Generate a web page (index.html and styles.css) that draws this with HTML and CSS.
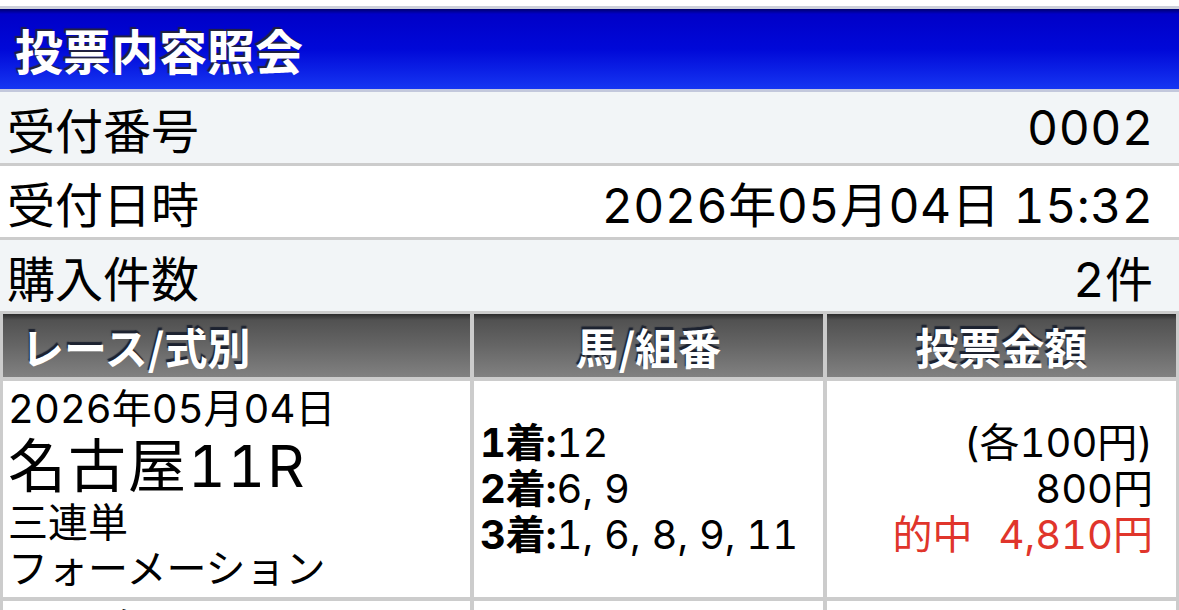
FILE: index.html
```html
<!DOCTYPE html>
<html lang="ja">
<head>
<meta charset="utf-8">
<title>投票内容照会</title>
<link rel="stylesheet" href="styles.css">
</head>
<body>
<div class="page">
  <div class="title">投票内容照会</div>
  <div class="info">
    <div class="info-row alt"><span class="label">受付番号</span><span class="value">0002</span></div>
    <div class="info-row"><span class="label">受付日時</span><span class="value">2026年05月04日 15:32</span></div>
    <div class="info-row alt last"><span class="label">購入件数</span><span class="value">2件</span></div>
  </div>
  <div class="bets">
    <div class="th th-left">レース/式別</div>
    <div class="th">馬/組番</div>
    <div class="th">投票金額</div>

    <div class="td race">
      <div class="race-date">2026年05月04日</div>
      <div class="race-name">名古屋11R</div>
      <div class="race-type">三連単</div>
      <div class="race-type">フォーメーション</div>
    </div>
    <div class="td combo">
      <div><b>1着:</b>12</div>
      <div><b>2着:</b>6, 9</div>
      <div><b>3着:</b>1, 6, 8, 9, 11</div>
    </div>
    <div class="td amount">
      <div>(各100円)</div>
      <div>800円</div>
      <div class="hit">的中<span class="hit-value">4,810円</span></div>
    </div>

    <div class="td race">
      <div class="race-date">2026年05月04日</div>
      <div class="race-name">名古屋12R</div>
      <div class="race-type">三連単</div>
      <div class="race-type">フォーメーション</div>
    </div>
    <div class="td combo">
      <div><b>1着:</b>1</div>
      <div><b>2着:</b>6, 9</div>
      <div><b>3着:</b>6, 8, 9</div>
    </div>
    <div class="td amount">
      <div>(各100円)</div>
      <div>400円</div>
    </div>
  </div>
</div>
</body>
</html>
```

FILE: styles.css
```css
html, body {
  margin: 0;
  padding: 0;
  background: #ffffff;
}

.page {
  height: 100vh;
  overflow: hidden;
  padding-top: 6px;
  box-sizing: border-box;
  font-family: Inter, "Noto Sans CJK JP", sans-serif;
  font-variant-numeric: tabular-nums;
  color: #000;
}

.title {
  height: 80px;
  border-top: 3px solid #cdd0da;
  border-bottom: 3px solid #c3c8dc;
  background: linear-gradient(#00006e 0px, #0000c8 5px, #0008d8 40px, #1636f2 80px);
  display: flex;
  align-items: center;
  padding-left: 15px;
  font-family: "Noto Sans CJK JP", sans-serif;
  font-weight: 700;
  font-size: 48px;
  color: #ffffff;
  text-shadow: -2px -2px 1px #22223a;
}

.info-row {
  height: 71px;
  display: flex;
  justify-content: space-between;
  align-items: center;
  padding: 0 26px 0 7px;
  font-size: 48px;
  background: #ffffff;
  border-bottom: 3px solid #cccccc;
}

.info-row .value {
  letter-spacing: 0.5px;
  margin-right: -0.5px;
}

.info-row.alt {
  background: #f2f5f7;
}

.info-row.last {
  border-bottom: none;
}

.bets {
  display: grid;
  grid-template-columns: 467px 1fr 1fr;
  gap: 4px;
  padding: 3px;
  background: #cccccc;
}

.th {
  height: 63px;
  display: flex;
  align-items: center;
  justify-content: center;
  background: linear-gradient(#2c2c2c 0px, #515151 6px, #646464 30px, #818181 63px);
  font-family: "Noto Sans CJK JP", sans-serif;
  font-weight: 700;
  font-size: 43px;
  color: #ffffff;
  text-shadow: -1px -3px 1px #1c2230;
}

.th-left {
  justify-content: flex-start;
  padding-left: 18px;
}

.td {
  background: #ffffff;
  font-size: 40px;
  line-height: 46px;
}

.race {
  padding: 5px 0 5px 5px;
}

.race-name {
  font-size: 58px;
  line-height: 68px;
  letter-spacing: 2px;
}

.combo {
  display: flex;
  flex-direction: column;
  justify-content: center;
  padding-left: 6px;
}

.combo b {
  font-weight: 700;
}

.amount {
  display: flex;
  flex-direction: column;
  justify-content: center;
  align-items: flex-end;
  padding-right: 23px;
}

.hit {
  color: #e0352b;
}

.hit-value {
  margin-left: 26px;
}
```
